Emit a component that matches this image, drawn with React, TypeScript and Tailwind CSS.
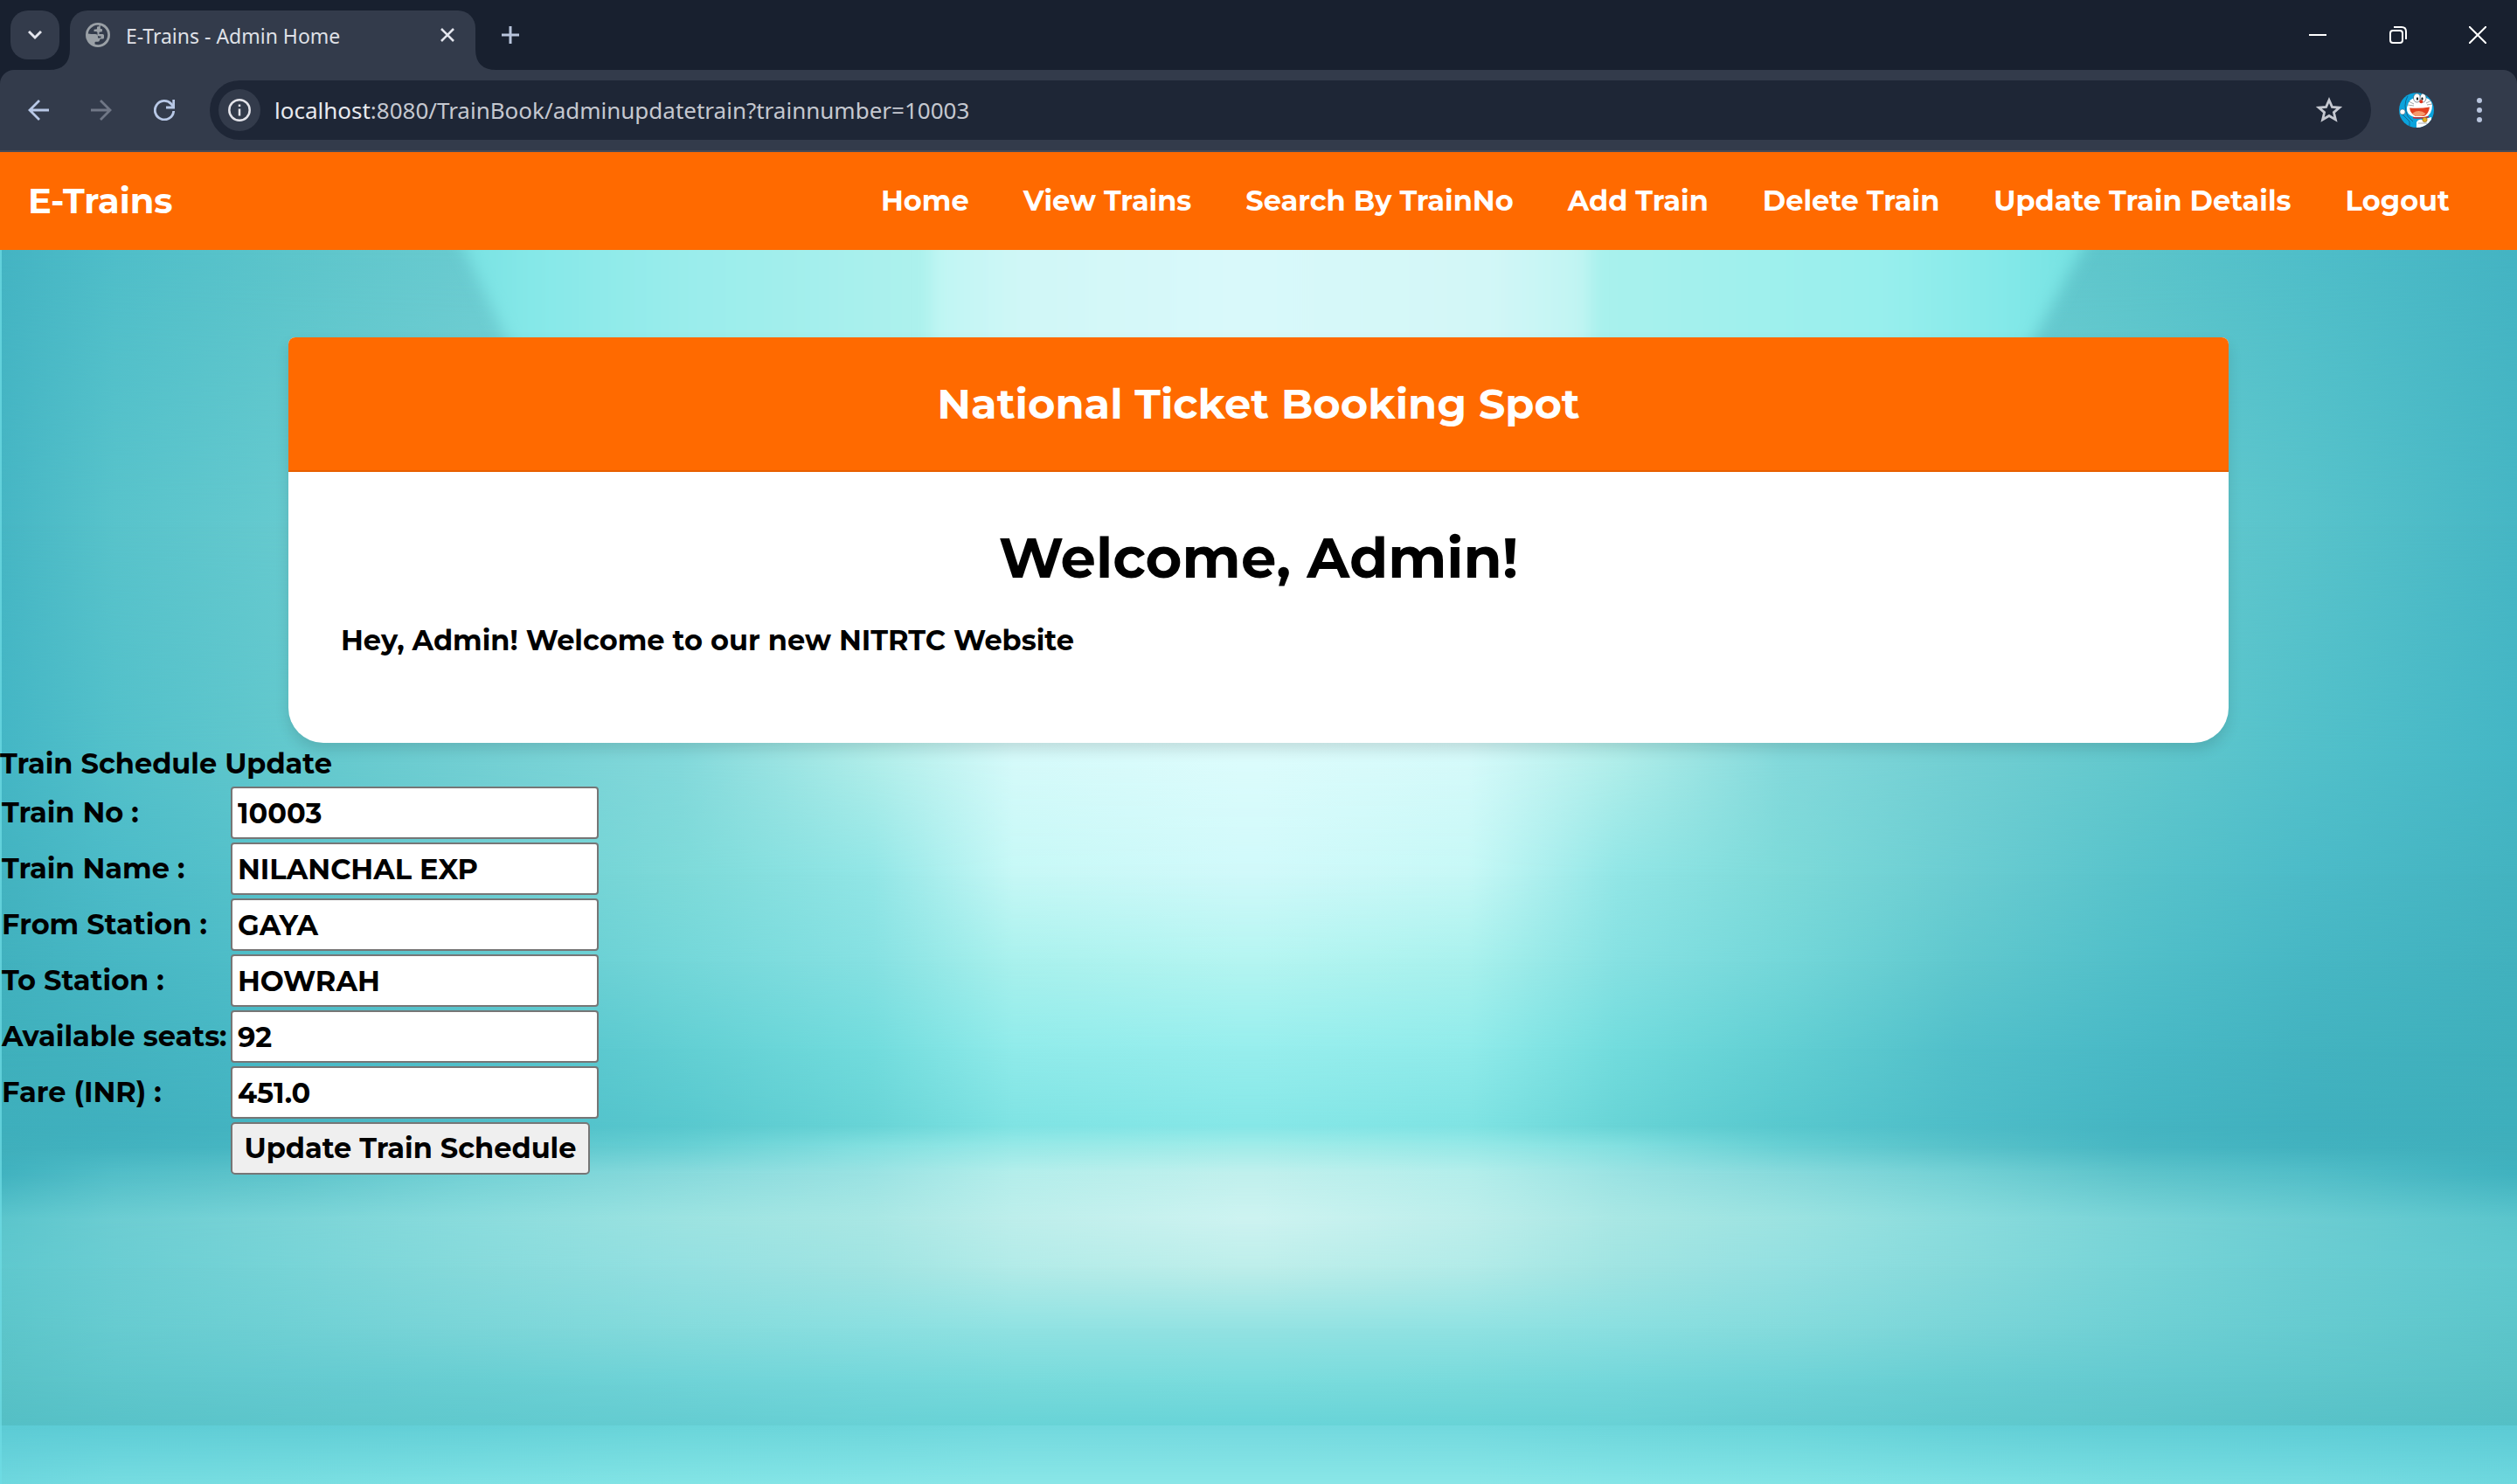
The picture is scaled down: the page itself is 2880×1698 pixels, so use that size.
import React from "react";

const navLinks = [
  "Home",
  "View Trains",
  "Search By TrainNo",
  "Add Train",
  "Delete Train",
  "Update Train Details",
  "Logout",
];

const fields = [
  { id: "trainno", label: "Train No :", value: "10003" },
  { id: "trainname", label: "Train Name :", value: "NILANCHAL EXP" },
  { id: "fromstation", label: "From Station :", value: "GAYA" },
  { id: "tostation", label: "To Station :", value: "HOWRAH" },
  { id: "available", label: "Available seats:", value: "92" },
  { id: "fare", label: "Fare (INR) :", value: "451.0" },
];

// Horizontal positions of the colour samples, from the centre outwards.
const rightStops = [1440, 1680, 1850, 2040, 2240, 2440, 2640, 2880];
const leftStops = [1420, 1160, 1000, 780, 540, 330, 130, 0];

// Each row: vertical position, then colours from the centre to the edge.
const rows: { y: number; colors: string[] }[] = [
  { y: 286, colors: ["#8fe6e6", "#8ae2e2", "#84dcdd", "#74d3d6", "#6acbd0", "#5cc5cb", "#4fbec9", "#44b4c3"] },
  { y: 600, colors: ["#dcfcfc", "#d5fafa", "#b0eeea", "#86dadc", "#72d0d4", "#66cacf", "#58c3cb", "#46b6c4"] },
  { y: 870, colors: ["#dcfcfc", "#d5fafa", "#b0eeea", "#83d9db", "#72cfd3", "#62c8cd", "#52c0ca", "#44b6c5"] },
  { y: 1000, colors: ["#d0f9fa", "#c6f8f6", "#92e6e6", "#7ddad9", "#6bcdd2", "#58c3cb", "#4cbbc8", "#43b3c0"] },
  { y: 1100, colors: ["#b4f5f1", "#a9f1ed", "#86e1e2", "#74d7d9", "#60c8ce", "#51bfc9", "#47b7c4", "#41b1be"] },
  { y: 1200, colors: ["#97eeed", "#90ebea", "#72dcdd", "#62cfd3", "#52c0ca", "#49b9c6", "#43b3c0", "#3fb0bc"] },
  { y: 1288, colors: ["#86e7e7", "#7fe3e3", "#68d4d6", "#58c8ce", "#4ebdc8", "#45b5c2", "#40b0be", "#3eafbc"] },
  { y: 1312, colors: ["#a2ece9", "#98e9e7", "#84e0e0", "#68d0d4", "#58c2ca", "#48b7c3", "#42b2bf", "#3fafbc"] },
  { y: 1342, colors: ["#c0f0ed", "#b4eeeb", "#9be3e3", "#88dadc", "#74d1d5", "#5ec4cb", "#52bec8", "#40b2bf"] },
  { y: 1395, colors: ["#cdf3f1", "#bdeeeb", "#a9e7e4", "#9ce3e1", "#8adcdd", "#7ad4d7", "#6ccdd2", "#5bc5cc"] },
  { y: 1450, colors: ["#bdeeea", "#b2ebe8", "#a0e4e2", "#94e0e1", "#86dadb", "#77d4d7", "#6acdd2", "#5fc8ce"] },
  { y: 1520, colors: ["#93e2e2", "#90e2e2", "#8adfe0", "#84dbdc", "#7ad5d8", "#6fd0d4", "#66cbd0", "#5cc5ca"] },
  { y: 1580, colors: ["#7adcdd", "#78dadb", "#74d7da", "#6fd3d7", "#68ced2", "#64cad0", "#5fc7cc", "#59c2c7"] },
  { y: 1631, colors: ["#68d4d8", "#68d3d6", "#68d1d5", "#64ccd1", "#60c9ce", "#5dc6cb", "#58c2c8", "#54bfc5"] },
  { y: 1631, colors: ["#74d9df", "#72d9de", "#6dd6db", "#6ad5da", "#64d0d7", "#61ced6", "#5ecdd6", "#5ccbd5"] },
  { y: 1698, colors: ["#8ae6e7", "#8ae6e7", "#86e5e7", "#83e4e5", "#7ee1e4", "#79dee1", "#76dce1", "#6ed7de"] },
];

function Backdrop() {
  return (
    <svg
      aria-hidden="true"
      className="absolute inset-0 h-full w-full"
      viewBox="0 286 2880 1412"
      preserveAspectRatio="none"
    >
      <defs>
        {rows.map((row, i) => (
          <linearGradient key={i} id={`row${i}`} gradientUnits="userSpaceOnUse" x1="0" x2="2880" y1="0" y2="0">
            {[...leftStops].reverse().map((x, k) => (
              <stop key={`l${x}`} offset={x / 2880} stopColor={row.colors[7 - k]} />
            ))}
            {rightStops.map((x, k) => (
              <stop key={`r${x}`} offset={x / 2880} stopColor={row.colors[k]} />
            ))}
          </linearGradient>
        ))}
        <linearGradient id="fade" x1="0" x2="0" y1="0" y2="1">
          <stop offset="0" stopColor="#fff" stopOpacity="0" />
          <stop offset="1" stopColor="#fff" stopOpacity="1" />
        </linearGradient>
        <mask id="fadeMask" maskContentUnits="objectBoundingBox" x="0" y="0" width="1" height="1">
          <rect width="1" height="1" fill="url(#fade)" />
        </mask>
        <linearGradient id="beamOuter" x1="0" x2="1" y1="0" y2="0">
          <stop offset="0" stopColor="#74e0e1" />
          <stop offset="0.06" stopColor="#86e8e8" />
          <stop offset="0.14" stopColor="#98eceb" />
          <stop offset="0.28" stopColor="#acf1ed" />
          <stop offset="0.7" stopColor="#a8f1ed" />
          <stop offset="0.86" stopColor="#98efed" />
          <stop offset="0.94" stopColor="#82e8e8" />
          <stop offset="1" stopColor="#6edede" />
        </linearGradient>
        <linearGradient id="beamInner" x1="0" x2="1" y1="0" y2="0">
          <stop offset="0" stopColor="#bef6f3" />
          <stop offset="0.14" stopColor="#d0f7f7" />
          <stop offset="0.45" stopColor="#d9f9fa" />
          <stop offset="0.85" stopColor="#d2f7f7" />
          <stop offset="1" stopColor="#bef4f2" />
        </linearGradient>
        <filter id="soft" x="-10%" y="-50%" width="120%" height="200%">
          <feGaussianBlur stdDeviation="9" />
        </filter>
        <clipPath id="beamClip">
          <rect x="0" y="286" width="2880" height="260" />
        </clipPath>
      </defs>
      {rows.slice(0, -1).map((row, i) => {
        const next = rows[i + 1];
        const height = next.y - row.y;
        if (height === 0) return null;
        return (
          <g key={i}>
            <rect x="0" y={row.y} width="2880" height={height} fill={`url(#row${i})`} />
            <rect x="0" y={row.y} width="2880" height={height} fill={`url(#row${i + 1})`} mask="url(#fadeMask)" />
          </g>
        );
      })}
      <g clipPath="url(#beamClip)">
        <path d="M500 220H2418L2212 600H680Z" fill="url(#beamOuter)" filter="url(#soft)" />
        <path d="M1065 220H1820V600H1065Z" fill="url(#beamInner)" filter="url(#soft)" />
      </g>
      <rect x="0" y="286" width="2" height="1412" fill="#6fdde6" fillOpacity="0.7" />
    </svg>
  );
}

function GlobeIcon() {
  return (
    <svg viewBox="0 0 28 28" className="h-7 w-7 shrink-0" aria-hidden="true">
      <circle cx="14" cy="14" r="14" fill="#9aa0a6" />
      <path
        d="M15.500 2.900C13.500 2.600 10.500 3 8.500 4.200C5 6.200 3.200 9 2.800 12.500L6.500 13H11Q14 13 14 16V17.500H16.500Q17.500 17.500 17.500 16.500V15.500H15.500Q13.500 15.500 13.500 13.500V11.500Q13.500 10 12 10H9.500V8.500Q9.500 7.500 10.500 7.500H12Q13 7.500 13 6.500V5.500Q13 4.200 14.200 4.200H15.500Z"
        fill="#333b4b"
      />
      <path
        d="M16.800 3.200C21.500 4.500 25 8.500 25.200 13.500C25.300 19.500 21 24.500 15 25.200Q11.500 25.300 10.500 24.500V22.800Q10.500 21.800 11.500 21.800H14Q16 21.800 16 20Q16 18.500 17.500 18.500H19.500Q21 18.500 21 17V14.500Q21 13 19.500 13H15.500V11.500Q15.500 10.500 16.500 10.500H17.500Q19 10.500 19 9V8Q19 7 18 7H16.800Z"
        fill="#333b4b"
      />
    </svg>
  );
}

function Avatar() {
  return (
    <svg viewBox="0 0 40 40" className="h-10 w-10" aria-hidden="true">
      <defs>
        <clipPath id="avatarClip">
          <circle cx="20" cy="20" r="20" />
        </clipPath>
      </defs>
      <g clipPath="url(#avatarClip)">
        <rect width="40" height="40" fill="#0aa3dc" />
        <path d="M10 4Q4 14 10 27L16 33" fill="none" stroke="#17577c" strokeWidth="0.8" />
        <path d="M3 24L12 33V38" fill="none" stroke="#17577c" strokeWidth="0.8" />
        <path d="M10 14Q12 7 18 6H31Q37 8 38 14Q38 24 31 28H17Q8 25 9 17Z" fill="#fff" />
        <path d="M20 34Q22 30 27 31L37 28V40H20Z" fill="#fff" />
        <ellipse cx="20.500" cy="6" rx="4" ry="5" fill="#fff" stroke="#345" strokeWidth="0.6" />
        <ellipse cx="27.500" cy="6" rx="3.500" ry="5" fill="#fff" stroke="#345" strokeWidth="0.6" />
        <ellipse cx="21" cy="7" rx="1.100" ry="1.800" fill="#111" />
        <ellipse cx="26.500" cy="7" rx="1.100" ry="1.800" fill="#111" />
        <circle cx="25.300" cy="10.300" r="2" fill="#e0331c" />
        <path d="M12 17.500Q24 18.500 35 16.500Q34 25 28 27H19Q13 24 12 17.500Z" fill="#e2401f" />
        <path d="M15.500 23.500Q23 18.500 30.500 24Q28 27 24 27H19Q17 26 15.500 23.500Z" fill="#f59a6c" />
        <path d="M11 10L17 13M10 14L17 15M37 9L31 12M38 13L32 14" stroke="#444" strokeWidth="0.5" />
        <path d="M16 28.500Q25 30 34 27.500" fill="none" stroke="#d0232b" strokeWidth="1.400" />
        <path d="M22 35H32" stroke="#555" strokeWidth="0.500" />
        <circle cx="29.500" cy="31" r="2.700" fill="#e2ad23" stroke="#7a5a10" strokeWidth="0.500" />
        <circle cx="4" cy="22" r="3" fill="#fff" stroke="#345" strokeWidth="0.400" />
      </g>
    </svg>
  );
}

function BrowserChrome() {
  return (
    <header className="bg-[#18202f] font-['Noto_Sans',sans-serif] font-normal">
      <div className="flex h-20 items-start justify-between pl-3">
        <div className="flex items-start">
          <button aria-label="Search tabs" className="mt-3 flex h-14 w-14 items-center justify-center rounded-[20px] bg-[#333b4b]">
            <svg viewBox="0 0 16 16" className="h-4 w-4" fill="none" stroke="#e4e6ee" strokeWidth="3">
              <path d="M1 4L8 11L15 4" />
            </svg>
          </button>
          <div className="relative mt-3 ml-3 flex h-[68px] w-[464px] items-start rounded-t-[20px] bg-[#333b4b] pt-[14px] pr-5 pl-[18px]">
            <svg viewBox="0 0 24 24" className="absolute bottom-0 -left-6 h-6 w-6" aria-hidden="true">
              <path d="M24 0V24H0Q24 24 24 0Z" fill="#333b4b" />
            </svg>
            <svg viewBox="0 0 24 24" className="absolute -right-6 bottom-0 h-6 w-6" aria-hidden="true">
              <path d="M0 0V24H24Q0 24 0 0Z" fill="#333b4b" />
            </svg>
            <GlobeIcon />
            <span className="ml-[18px] flex-1 text-[23px] leading-[30px] text-[#dfe0e6]">E-Trains - Admin Home</span>
            <button aria-label="Close tab" className="flex h-7 w-6 items-center justify-center">
              <svg viewBox="0 0 16 16" className="h-4 w-4" fill="none" stroke="#e4e6ee" strokeWidth="2.600">
                <path d="M1 1L15 15M15 1L1 15" />
              </svg>
            </button>
          </div>
          <button aria-label="New tab" className="ml-[26px] flex h-20 w-7 items-center justify-center">
            <svg viewBox="0 0 20 20" className="h-5 w-5" fill="none" stroke="#b8c4dc" strokeWidth="3">
              <path d="M10 0V20M0 10H20" />
            </svg>
          </button>
        </div>
        <div className="flex h-20">
          <button aria-label="Minimize" className="flex w-[92px] items-center justify-center">
            <svg viewBox="0 0 20 20" className="h-5 w-5" stroke="#fff" strokeWidth="2">
              <path d="M0 10H20" />
            </svg>
          </button>
          <button aria-label="Restore" className="flex w-[92px] items-center justify-center">
            <svg viewBox="0 0 20 20" className="h-5 w-5" fill="none" stroke="#fff" strokeWidth="2">
              <rect x="1" y="5" width="14" height="14" rx="3" />
              <path d="M5 1H14Q19 1 19 6V15" />
            </svg>
          </button>
          <button aria-label="Close" className="flex w-[90px] items-center justify-center">
            <svg viewBox="0 0 20 20" className="h-5 w-5" fill="none" stroke="#fff" strokeWidth="2">
              <path d="M0 0L20 20M20 0L0 20" />
            </svg>
          </button>
        </div>
      </div>
      <div className="flex h-[94px] items-center rounded-t-[16px] border-b-2 border-[#464b57] bg-[#333b4b] pl-2">
        <button aria-label="Back" className="flex h-[72px] w-[72px] items-center justify-center">
          <svg viewBox="0 0 24 24" className="h-6 w-6" fill="none" stroke="#b8c8e6" strokeWidth="2.800">
            <path d="M24 12H2M13 1L2 12L13 23" />
          </svg>
        </button>
        <button aria-label="Forward" className="flex h-[72px] w-[72px] items-center justify-center">
          <svg viewBox="0 0 24 24" className="h-6 w-6" fill="none" stroke="#707786" strokeWidth="2.800">
            <path d="M0 12H22M11 1L22 12L11 23" />
          </svg>
        </button>
        <button aria-label="Reload" className="flex h-[72px] w-[72px] items-center justify-center">
          <svg viewBox="0 0 24 24" className="h-6 w-6" fill="none" stroke="#b8c8e6" strokeWidth="2.800">
            <path d="M22.700 13A10.700 10.700 0 1 1 20 5L22.500 8.500" />
            <path d="M22.700 0V9H14" />
          </svg>
        </button>
        <div className="ml-4 flex h-[68px] flex-1 items-center rounded-full bg-[#1e2636] pr-8 pl-[10px]">
          <button aria-label="Site information" className="flex h-12 w-12 items-center justify-center rounded-full bg-[#333b4b]">
            <svg viewBox="0 0 26 26" className="h-[26px] w-[26px]" fill="none" stroke="#e4e4ea" strokeWidth="2.500">
              <circle cx="13" cy="13" r="11.700" />
              <path d="M13 11.500V19.500M13 6.500V9" />
            </svg>
          </button>
          <p className="ml-4 flex-1 text-[26px] leading-9 text-[#c5c8d0]">
            <span className="text-[#e8e9ee]">localhost</span>:8080/TrainBook/adminupdatetrain?trainnumber=10003
          </p>
          <button aria-label="Bookmark this tab" className="flex h-8 w-8 items-center justify-center">
            <svg viewBox="0 0 32 32" className="h-8 w-8" fill="none" stroke="#c5c8d0" strokeWidth="2.800">
              <path d="M16 4.500L19.400 12.300L27.800 13L21.400 18.600L23.400 26.900L16 22.500L8.600 26.900L10.600 18.600L4.200 13L12.600 12.300Z" />
            </svg>
          </button>
        </div>
        <button aria-label="Profile" className="ml-8">
          <Avatar />
        </button>
        <button aria-label="Menu" className="mr-[27px] ml-9 flex h-10 w-8 items-center justify-center">
          <svg viewBox="0 0 6 28" className="h-7 w-[6px]" fill="#b8c4dc">
            <circle cx="3" cy="3" r="3" />
            <circle cx="3" cy="14" r="3" />
            <circle cx="3" cy="25" r="3" />
          </svg>
        </button>
      </div>
    </header>
  );
}

export default function App() {
  return (
    <div className="flex min-h-screen flex-col font-['Montserrat','Inter',sans-serif] text-[32px] leading-[48px] font-bold text-black">
      <BrowserChrome />
      <nav className="flex h-28 items-center justify-between bg-[#ff6a00] pr-[77px] pl-8 text-white">
        <a href="#home" className="text-[40px]">
          E-Trains
        </a>
        <ul className="flex gap-[62px]">
          {navLinks.map((label) => (
            <li key={label}>
              <a href="#top">{label}</a>
            </li>
          ))}
        </ul>
      </nav>
      <main className="relative flex-1 overflow-hidden">
        <Backdrop />
        <div className="relative">
          <div className="mx-auto max-w-[2280px] px-[30px] pt-[100px]">
            <section className="overflow-hidden rounded-t-[8px] rounded-b-[40px] bg-white shadow-[0_8px_16px_rgba(0,0,0,0.12)]">
              <h2 className="flex h-[154px] items-center justify-center border-b-2 border-[#e85f00] bg-[#ff6a00] text-[48px] text-white">
                National Ticket Booking Spot
              </h2>
              <div className="px-[60px] pt-[58px] pb-[93px]">
                <h1 className="text-center text-[64px] leading-[80px]">Welcome, Admin!</h1>
                <p className="mt-[31px]">Hey, Admin! Welcome to our new NITRTC Website</p>
              </div>
            </section>
          </div>
          <form onSubmit={(e) => e.preventDefault()}>
            <h3>Train Schedule Update</h3>
            <table className="border-collapse">
              <tbody>
                {fields.map((f) => (
                  <tr key={f.id}>
                    <td className="w-[262px] p-[2px] whitespace-nowrap">
                      <label htmlFor={f.id}>{f.label}</label>
                    </td>
                    <td className="p-[2px]">
                      <input
                        id={f.id}
                        type="text"
                        defaultValue={f.value}
                        className="block h-[60px] w-[421px] rounded-[4px] border-2 border-[#767676] bg-white px-[6px]"
                      />
                    </td>
                  </tr>
                ))}
                <tr>
                  <td className="p-[2px]" />
                  <td className="p-[2px]">
                    <button type="submit" className="block h-[60px] w-[411px] rounded-[5px] border-2 border-[#767676] bg-[#efefef] whitespace-nowrap">
                      Update Train Schedule
                    </button>
                  </td>
                </tr>
              </tbody>
            </table>
          </form>
        </div>
      </main>
    </div>
  );
}
